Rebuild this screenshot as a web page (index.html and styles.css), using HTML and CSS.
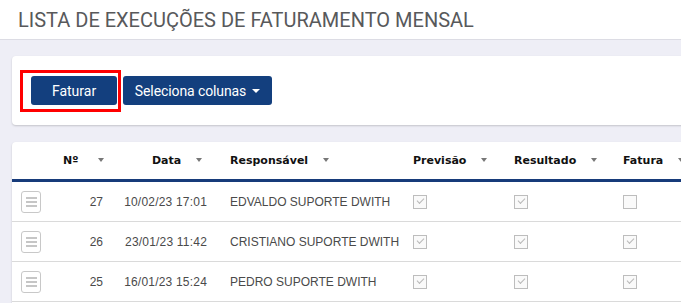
FILE: index.html
```html
<!DOCTYPE html>
<html>
<head>
<meta charset="utf-8">
<link rel="stylesheet" href="styles.css">
</head>
<body>
<header class="top">
  <h1 class="title">LISTA DE EXECUÇÕES DE FATURAMENTO MENSAL</h1>
</header>
<main class="content">
  <section class="card toolbar">
    <div class="highlight">
      <button class="btn">Faturar</button>
    </div>
    <button class="btn btn-drop">Seleciona colunas <span class="caret"></span></button>
  </section>
  <section class="card grid-card">
    <table class="grid">
      <colgroup>
        <col class="c-icon"><col class="c-num"><col class="c-date"><col class="c-resp"><col class="c-prev"><col class="c-res"><col class="c-fat">
      </colgroup>
      <thead>
        <tr>
          <th></th>
          <th class="r h-num">Nº <span class="sort sort-wide"></span></th>
          <th class="r h-date">Data <span class="sort"></span></th>
          <th>Responsável <span class="sort"></span></th>
          <th>Previsão <span class="sort"></span></th>
          <th>Resultado <span class="sort"></span></th>
          <th>Fatura <span class="sort"></span></th>
        </tr>
      </thead>
      <tbody>
        <tr>
          <td><span class="menu"><i></i><i></i><i></i></span></td>
          <td class="r">27</td>
          <td class="r d-date">10/02/23 17:01</td>
          <td>EDVALDO SUPORTE DWITH</td>
          <td><span class="chk on"></span></td>
          <td><span class="chk on"></span></td>
          <td><span class="chk"></span></td>
        </tr>
        <tr>
          <td><span class="menu"><i></i><i></i><i></i></span></td>
          <td class="r">26</td>
          <td class="r d-date">23/01/23 11:42</td>
          <td>CRISTIANO SUPORTE DWITH</td>
          <td><span class="chk on"></span></td>
          <td><span class="chk on"></span></td>
          <td><span class="chk on"></span></td>
        </tr>
        <tr>
          <td><span class="menu"><i></i><i></i><i></i></span></td>
          <td class="r">25</td>
          <td class="r d-date">16/01/23 15:24</td>
          <td>PEDRO SUPORTE DWITH</td>
          <td><span class="chk on"></span></td>
          <td><span class="chk on"></span></td>
          <td><span class="chk on"></span></td>
        </tr>
      </tbody>
    </table>
  </section>
</main>
</body>
</html>
```
FILE: styles.css
```css
html, body {
  margin: 0;
  padding: 0;
}
body {
  width: 681px;
  height: 303px;
  overflow: hidden;
  background: #eeeef6;
  font-family: "DejaVu Sans", sans-serif;
}
.top {
  background: #fff;
  height: 39px;
  border-bottom: 1px solid #dcdce4;
  display: flex;
  align-items: center;
  padding-left: 18px;
}
.title {
  margin: 0;
  font-family: Roboto, "Liberation Sans", sans-serif;
  font-weight: 400;
  font-size: 20px;
  color: #58595b;
}
.content {
  padding: 16px 0 0 12px;
  display: flex;
  flex-direction: column;
  gap: 17px;
  width: 720px;
}
.card {
  background: #fff;
  border-radius: 4px;
  box-shadow: 0 1px 2px rgba(0,0,0,0.18);
}
.toolbar {
  height: 69px;
  display: flex;
  align-items: center;
  gap: 2px;
  padding-left: 8px;
}
.highlight {
  border: 3px solid #ff0000;
  padding: 3px 0 4px 8px;
  margin-top: 1px;
  display: flex;
  width: 87px;
}
.btn {
  font-family: Roboto, "Liberation Sans", sans-serif;
  font-size: 14px;
  color: #fff;
  background: #133f7e;
  border: none;
  border-radius: 3px;
  height: 29px;
  padding: 0 15px;
  white-space: nowrap;
  cursor: pointer;
}
.highlight .btn {
  width: 86px;
}
.btn-drop {
  padding: 0 12px;
  width: 149px;
  display: flex;
  align-items: center;
  justify-content: center;
  gap: 6px;
  letter-spacing: -0.1px;
}
.caret {
  width: 0;
  height: 0;
  border-left: 4px solid transparent;
  border-right: 4px solid transparent;
  border-top: 4px solid #fff;
  margin-top: 1px;
}
.grid-card {
  height: 200px;
  border-radius: 4px 4px 0 0;
}
.grid {
  border-collapse: collapse;
  table-layout: fixed;
  width: 700px;
}
.c-icon { width: 43px; }
.c-num { width: 56px; }
.c-date { width: 111px; }
.c-resp { width: 183px; }
.c-prev { width: 101px; }
.c-res { width: 109px; }
.c-fat { width: 97px; }
.grid th {
  height: 37px;
  font-size: 11px;
  font-weight: 700;
  color: #111;
  text-align: left;
  padding: 0 8px;
  border-bottom: 3px solid #173b7a;
  white-space: nowrap;
}
.grid th.h-num { text-align: right; padding-right: 14px; }
.grid th.h-date { text-align: right; padding-right: 20px; }
.grid td {
  height: 39px;
  font-family: "Liberation Sans", Arial, sans-serif;
  font-size: 12px;
  color: #4a4a4a;
  padding: 0 8px;
  border-bottom: 1px solid #dadada;
  white-space: nowrap;
}
.grid td.r { text-align: right; padding-right: 8px; }
.grid td.d-date { padding-right: 15px; letter-spacing: 0.2px; }
.grid td:first-child { padding: 0 0 0 9px; }
.sort {
  display: inline-block;
  width: 0;
  height: 0;
  border-left: 3.5px solid transparent;
  border-right: 3.5px solid transparent;
  border-top: 4px solid #777;
  margin-left: 11px;
  vertical-align: 2px;
}
.sort-wide { margin-left: 16px; }
.menu {
  display: flex;
  flex-direction: column;
  justify-content: center;
  align-items: center;
  gap: 2px;
  width: 18px;
  height: 20px;
  border: 1px solid #c8c8c8;
  border-radius: 3px;
}
.menu i {
  display: block;
  width: 11px;
  height: 2px;
  background: #c6c6c6;
}
.chk {
  display: inline-block;
  width: 12px;
  height: 12px;
  border: 1px solid #bdbdbd;
  background: #fafafa;
  position: relative;
  vertical-align: middle;
}
.chk.on::after {
  content: "";
  position: absolute;
  left: 3px;
  top: 2px;
  width: 6px;
  height: 3px;
  border-left: 1px solid #b8b8b8;
  border-bottom: 1px solid #b8b8b8;
  transform: rotate(-45deg);
}
```
